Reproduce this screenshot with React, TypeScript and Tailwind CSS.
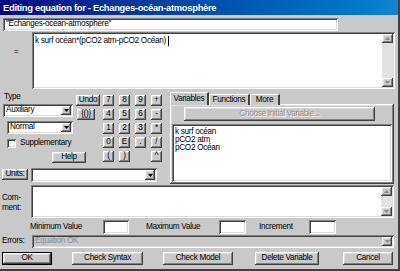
import React from "react";

const RAISED =
  "shadow-[inset_-1px_-1px_#404040,inset_1px_1px_#ffffff,inset_-2px_-2px_#808080,inset_2px_2px_#dcdcdc]";
const SUNKEN =
  "shadow-[inset_1px_1px_#808080,inset_-1px_-1px_#ffffff,inset_2px_2px_#404040,inset_-2px_-2px_#dcdcdc]";
const BG = "bg-[#c9c9c9]";
const FONT = "font-['Liberation_Sans',Arial,sans-serif]";

function Tri({ up, gray }: { up?: boolean; gray?: boolean }) {
  return (
    <svg width="5" height="3" viewBox="0 0 5 3">
      <path d={up ? "M2.5 0L5 3H0z" : "M0 0h5L2.5 3z"} fill={gray ? "#8a8a8a" : "#000"} />
    </svg>
  );
}

function Btn({ className = "", children }: { className?: string; children?: React.ReactNode }) {
  return (
    <div className={`${RAISED} ${BG} flex items-center justify-center shrink-0 whitespace-nowrap ${className}`}>
      {children}
    </div>
  );
}

function Combo({ className = "", text, gray }: { className?: string; text?: string; gray?: boolean }) {
  return (
    <div className={`${SUNKEN} ${gray ? BG : "bg-white"} flex items-center p-[2px] shrink-0 ${className}`}>
      <span className={`flex-1 pl-[1px] ${gray ? "text-[#8a8a8a]" : ""}`}>{text}</span>
      <Btn className="w-[10px] h-full">
        <Tri gray={gray} />
      </Btn>
    </div>
  );
}

function VScroll() {
  return (
    <div className="w-[11px] h-full flex flex-col shrink-0">
      <Btn className="h-[9px] w-full">
        <Tri up gray />
      </Btn>
      <div className="flex-1 bg-[#e2e2e2]" />
      <Btn className="h-[9px] w-full">
        <Tri gray />
      </Btn>
    </div>
  );
}

const KEYS: (string | null)[] = [
  "7", "8", "9", "+",
  "4", "5", "6", "-",
  "1", "2", "3", "*",
  "0", "E", ".", "/",
  "(", ")", null, "^",
];

export default function App() {
  return (
    <div
      className={`w-[400px] h-[271px] ${BG} ${FONT} text-[8.2px] tracking-[-0.3px] leading-none text-black overflow-hidden flex flex-col border-r-2 border-b-2 border-[#404040]`}
    >
      {/* Title bar */}
      <div className="h-[15px] shrink-0 flex items-center pl-[3px] bg-linear-to-r from-[#000080] to-[#1084d0] text-white font-bold text-[9.4px]">
        Editing equation for - Echanges-océan-atmosphère
      </div>

      {/* Name */}
      <div className="mt-[3px] ml-[3px] flex">
        <div className={`${SUNKEN} bg-white w-[335px] h-[13px] flex items-center pl-[3px]`}>
          "Echanges-océan-atmosphère"
        </div>
      </div>

      {/* Equation */}
      <div className="mt-[1px] flex h-[57px]">
        <div className="w-[32px] flex justify-center pt-[16px]">=</div>
        <div className={`${SUNKEN} bg-white flex-1 mr-[3px] flex p-[2px]`}>
          <div className="flex-1 pl-[1px] pt-[3px] flex items-start">
            <span>k surf océan*(pCO2 atm-pCO2 Océan)</span>
            <span className="inline-block w-px h-[10px] bg-black ml-[2px] -mt-[1px]" />
          </div>
          <VScroll />
        </div>
      </div>

      {/* Middle */}
      <div className="mt-[3px] flex">
        {/* Left */}
        <div className="w-[168px] ml-[2px] flex flex-col">
          <div className="flex">
            <div className="w-[73px] ml-[1px] flex flex-col">
              <div className="h-[11px] pl-[1px] flex items-center">Type</div>
              <Combo className="mt-[1px] w-[70px] h-[13px]" text="Auxiliary" />
              <Combo className="mt-[4px] ml-[4px] w-[66px] h-[13px]" text="Normal" />
              <div className="mt-[4px] ml-[4px] h-[10px] flex items-center gap-[4px]">
                <div className={`${SUNKEN} bg-white w-[9px] h-[9px]`} />
                <span>Supplementary</span>
              </div>
              <Btn className="mt-[4px] ml-[49px] w-[34px] h-[11px]">Help</Btn>
            </div>
            <div className="w-[27px] flex flex-col pt-[3px]">
              <Btn className="w-[24px] h-[11px]">Undo</Btn>
              <Btn className="mt-[3px] ml-[1px] w-[18px] h-[11px]">{"{()}"}</Btn>
            </div>
            <div className="grid grid-cols-[repeat(4,11px)] gap-x-[5px] gap-y-[3px] pt-[3px] self-start">
              {KEYS.map((k, i) =>
                k === null ? (
                  <div key={i} className="h-[11px]" />
                ) : (
                  <Btn key={i} className="w-[11px] h-[11px] tracking-normal">
                    {k}
                  </Btn>
                )
              )}
            </div>
          </div>
          <div className="mt-[5px] flex items-start">
            <Btn className="w-[26px] h-[11px] mt-[1px]">Units:</Btn>
            <Combo className="ml-[3px] w-[126px] h-[14px]" />
          </div>
        </div>

        {/* Right: tabs */}
        <div className="flex-1 mr-[4px] flex flex-col">
          <div className="h-[13px] flex items-end relative z-10">
            <div
              className={`${BG} w-[39px] h-[13px] border-t border-l border-white border-r-2 border-r-[#404040] flex items-center justify-center`}
            >
              Variables
            </div>
            <div
              className={`${BG} w-[41px] h-[11px] border-t border-l border-white border-r-2 border-r-[#404040] flex items-center justify-center`}
            >
              Functions
            </div>
            <div
              className={`${BG} w-[30px] h-[11px] border-t border-l border-white border-r-2 border-r-[#404040] flex items-center justify-center`}
            >
              More
            </div>
          </div>
          <div className={`${RAISED} ${BG} h-[80px] -mt-[1px] p-[2px] flex flex-col`}>
            <Btn className="mt-[1px] ml-[12px] w-[191px] h-[14px] text-[#8a8a8a] [text-shadow:1px_1px_0_#ffffff]">
              Choose Initial Variable...
            </Btn>
            <div className={`${SUNKEN} bg-white mt-[3px] flex-1 pl-[3px] pt-[4px] leading-[8px] flex flex-col`}>
              <span>k surf océan</span>
              <span>pCO2 atm</span>
              <span>pCO2 Océan</span>
            </div>
          </div>
        </div>
      </div>

      {/* Comment */}
      <div className="mt-[1px] flex h-[33px]">
        <div className="w-[31px] pl-[2px] pt-[8px] leading-[10px]">
          Com-
          <br />
          ment:
        </div>
        <div className={`${SUNKEN} bg-white flex-1 mr-[4px] flex justify-end p-[2px]`}>
          <VScroll />
        </div>
      </div>

      {/* Min / Max */}
      <div className="mt-[2px] h-[14px] flex items-center">
        <span className="ml-[30px] w-[73px]">Minimum Value</span>
        <div className={`${SUNKEN} bg-white w-[26px] h-[14px]`} />
        <span className="ml-[17px] w-[73px]">Maximum Value</span>
        <div className={`${SUNKEN} bg-white w-[27px] h-[14px]`} />
        <span className="ml-[13px] w-[50px]">Increment</span>
        <div className={`${SUNKEN} bg-white w-[27px] h-[14px]`} />
      </div>

      {/* Errors */}
      <div className="mt-[1px] h-[13px] flex items-center">
        <span className="w-[32px] pl-[2px]">Errors:</span>
        <Combo className="flex-1 mr-[4px] h-[13px]" text="Equation OK" gray />
      </div>

      {/* Buttons */}
      <div className="mt-[4px] h-[13px] flex">
        <div className="ml-[2px] w-[50px] h-full border border-black flex">
          <Btn className="flex-1 h-full">OK</Btn>
        </div>
        <Btn className="ml-[20px] w-[71px] h-full">Check Syntax</Btn>
        <Btn className="ml-[20px] w-[70px] h-full">Check Model</Btn>
        <Btn className="ml-[22px] w-[64px] h-full">Delete Variable</Btn>
        <Btn className="ml-[24px] w-[50px] h-full">Cancel</Btn>
      </div>
    </div>
  );
}
